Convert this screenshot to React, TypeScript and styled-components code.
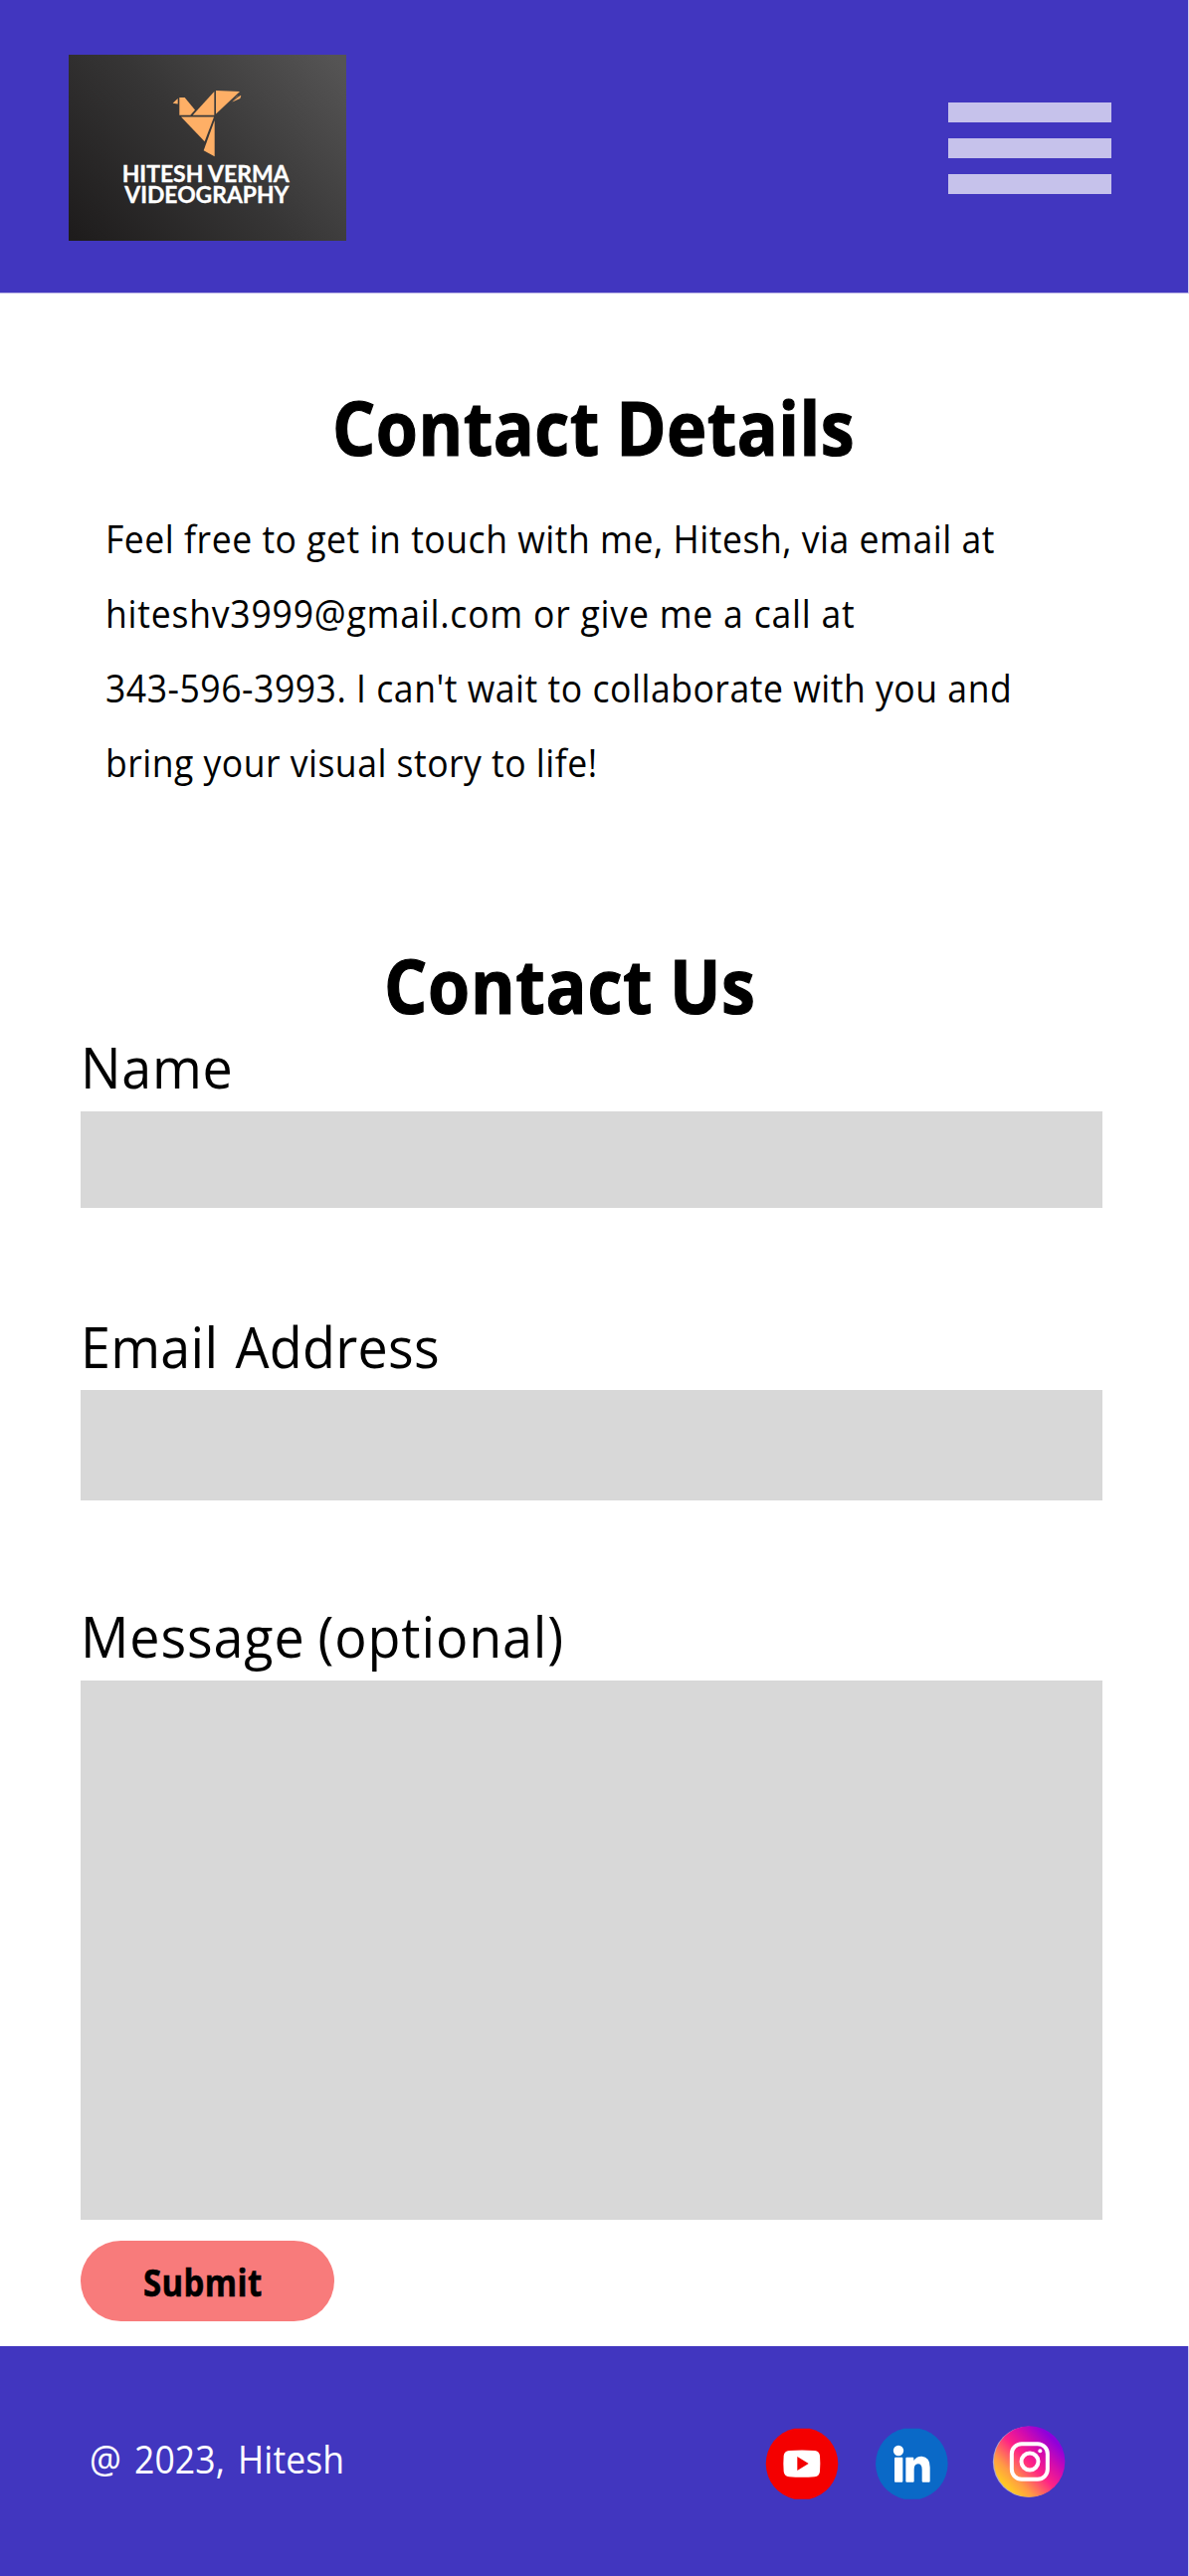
import React from "react";
import styled, { createGlobalStyle } from "styled-components";

const colors = {
  brand: "#4136bf",
  bar: "#c6c2eb",
  field: "#d8d8d8",
  accent: "#f87b7b",
};

const GlobalStyle = createGlobalStyle`
  *, *::before, *::after { box-sizing: border-box; }
  body {
    margin: 0;
    background: #fff;
    color: #000;
    font-family: "Open Sans", "Noto Sans", sans-serif;
  }
`;

const Page = styled.div`
  display: flex;
  flex-direction: column;
  width: 1195px;
  height: 2589px;
  overflow: hidden;
`;

const Header = styled.header`
  display: flex;
  justify-content: space-between;
  align-items: flex-start;
  height: 295px;
  padding: 55px 77px 0 69px;
  background: ${colors.brand};
  border-right: 1px solid #d0cdf0;
  border-bottom: 1px solid #b9b3e6;
`;

const Logo = styled.svg`
  display: block;
  width: 279px;
  height: 187px;
`;

const LogoText = styled.text`
  font-family: Lato, "Open Sans", sans-serif;
  font-size: 67px;
  font-weight: 700;
  fill: #fff;
  stroke: #fff;
  stroke-width: 1px;
`;

const MenuButton = styled.button`
  display: flex;
  flex-direction: column;
  gap: 16px;
  width: 164px;
  margin: 48px 0 0;
  padding: 0;
  border: 0;
  background: none;
`;

const MenuBar = styled.span`
  height: 20px;
  background: ${colors.bar};
`;

const Main = styled.main`
  display: flex;
  flex-direction: column;
  align-items: flex-start;
  padding: 94px 87px 0 80px;
  height: 2063px;
`;

const Fitted = styled.span<{ $scale: number; $track?: number; $words?: number }>`
  display: inline-block;
  white-space: nowrap;
  transform: scaleX(${(p) => p.$scale});
  transform-origin: left;
  letter-spacing: ${(p) => p.$track ?? 0}px;
  word-spacing: ${(p) => p.$words ?? 0}px;
`;

const Title = styled.h1<{ $indent: number }>`
  margin: 0 0 0 ${(p) => p.$indent}px;
  font-size: 75.6px;
  line-height: 80px;
  font-weight: 700;
  -webkit-text-stroke: 1.2px #000;
`;

const Intro = styled.p`
  display: flex;
  flex-direction: column;
  margin: 35px 0 146px 26px;
  font-size: 37.8px;
  line-height: 75px;
`;

const Form = styled.form`
  display: flex;
  flex-direction: column;
  align-items: flex-start;
  width: 100%;
  padding-top: 12px;
`;

const Field = styled.label<{ $after: number }>`
  display: flex;
  flex-direction: column;
  width: 100%;
  margin-bottom: ${(p) => p.$after}px;
`;

const Label = styled.span<{ $gap: number }>`
  margin: 0 0 ${(p) => p.$gap}px 1px;
  font-size: 56.7px;
  line-height: 60px;
`;

const Input = styled.input<{ $height: number }>`
  width: 1027px;
  height: ${(p) => p.$height}px;
  margin-left: 1px;
  padding: 0 20px;
  border: 0;
  border-radius: 0;
  background: ${colors.field};
  font: inherit;
`;

const TextArea = styled.textarea`
  display: block;
  width: 1027px;
  height: 542px;
  margin-left: 1px;
  padding: 20px;
  border: 0;
  border-radius: 0;
  resize: none;
  background: ${colors.field};
  font: inherit;
`;

const Submit = styled.button`
  width: 255px;
  height: 81px;
  margin-left: 1px;
  padding: 2px 0 0 63px;
  border: 0;
  border-radius: 41px;
  background: ${colors.accent};
  color: #000;
  font-family: inherit;
  font-size: 37.8px;
  line-height: 79px;
  font-weight: 700;
  text-align: left;
  -webkit-text-stroke: 0.6px #000;
`;

const Footer = styled.footer`
  display: flex;
  justify-content: space-between;
  align-items: flex-start;
  height: 231px;
  padding: 78px 123px 0 90px;
  background: ${colors.brand};
  border-right: 1px solid #d0cdf0;
`;

const Copyright = styled.span`
  margin-top: 16px;
  color: #fff;
  font-size: 37.8px;
  line-height: 40px;
`;

const Socials = styled.nav`
  display: flex;
  align-items: flex-start;
`;

const SocialIcon = styled.svg<{ $before?: number; $top?: number }>`
  display: block;
  width: 74px;
  height: 74px;
  margin: ${(p) => p.$top ?? 3}px 0 0 ${(p) => p.$before ?? 0}px;
`;

const introLines = [
  { text: "Feel free to get in touch with me, Hitesh, via email at", track: 0.57, words: 0 },
  { text: "hiteshv3999@gmail.com or give me a call at", track: 0.84, words: 0 },
  { text: "343-596-3993. I can't wait to collaborate with you and", track: 0.57, words: 0 },
  { text: "bring your visual story to life!", track: 0.53, words: 0 },
];

function BrandLogo() {
  return (
    <Logo viewBox="57 45 837 560" preserveAspectRatio="none" role="img" aria-label="Hitesh Verma Videography">
      <defs>
        <linearGradient id="plate" gradientUnits="userSpaceOnUse" x1="130" y1="660" x2="830" y2="20">
          <stop offset="0" stopColor="#1e1c1c" />
          <stop offset="0.5" stopColor="#363535" />
          <stop offset="1" stopColor="#555454" />
        </linearGradient>
      </defs>
      <rect x="57" y="45" width="837" height="560" fill="url(#plate)" />
      <g fill="#feaf66">
        <path d="M371 191 386 177V193Z" />
        <path d="M391 174H407L438 211 424 227H391Z" />
        <path d="M496 156V227H431Z" />
        <path d="M501 153 573 156 501 223Z" />
        <path d="M550 187 564 170 577 168 574 177Z" />
        <path d="M396 232H495L467 306Z" />
        <path d="M497 243V351L464 333Z" />
      </g>
      <path d="M547 187 576 164" stroke="#454444" strokeWidth="3" />
      <LogoText x="218" y="428" textLength="504" lengthAdjust="spacingAndGlyphs">HITESH VERMA</LogoText>
      <LogoText x="226" y="490" textLength="495" lengthAdjust="spacingAndGlyphs">VIDEOGRAPHY</LogoText>
    </Logo>
  );
}

function YouTubeIcon() {
  return (
    <SocialIcon viewBox="56 58 222 222" aria-label="YouTube">
      <path d="M144 63H190A109 109 0 0 1 190 276H144A109 109 0 0 1 144 63Z" fill="#f40000" />
      <path
        d="M128 130Q167 127 206 130 219 131 221 145 223 169 221 193 219 208 206 209 167 212 128 209 114 208 112 193 110 169 112 145 114 131 128 130Z"
        fill="#fff"
      />
      <path d="M153 148V190L187 169Z" fill="#f40000" />
    </SocialIcon>
  );
}

function LinkedInIcon() {
  return (
    <SocialIcon $before={36} viewBox="388 58 222 222" aria-label="LinkedIn">
      <path d="M477 63H523A109 109 0 0 1 523 276H477A109 109 0 0 1 477 63Z" fill="#0a69c7" />
      <g fill="#fff">
        <circle cx="460" cy="130" r="15.5" />
        <rect x="448" y="150" width="25" height="75" rx="3" />
        <path d="M485 150H503Q506 150 506 153V160Q514 147 530 147 555 149 555 180V222Q555 225 552 225H534Q531 225 531 222V187Q531 170 519 170 507 171 507 187V222Q507 225 504 225H485Q482 225 482 222V153Q482 150 485 150Z" />
      </g>
    </SocialIcon>
  );
}

function InstagramIcon() {
  return (
    <SocialIcon $before={44} $top={1} viewBox="740 49 222 222" aria-label="Instagram">
      <defs>
        <linearGradient id="insta" gradientUnits="userSpaceOnUse" x1="772" y1="240" x2="932" y2="84">
          <stop offset="0" stopColor="#ffd51c" />
          <stop offset="0.22" stopColor="#ff9a45" />
          <stop offset="0.5" stopColor="#ff2385" />
          <stop offset="0.72" stopColor="#d20bae" />
          <stop offset="0.95" stopColor="#8e00dc" />
        </linearGradient>
      </defs>
      <circle cx="849" cy="161" r="106.5" fill="#b3a4c6" />
      <circle cx="853" cy="160" r="107" fill="url(#insta)" />
      <rect x="799.5" y="106.5" width="108" height="107" rx="30" fill="none" stroke="#fff" strokeWidth="12" />
      <circle cx="854" cy="160" r="25.5" fill="none" stroke="#fff" strokeWidth="12" />
      <circle cx="885" cy="128" r="6" fill="#fff" />
    </SocialIcon>
  );
}

export default function App() {
  return (
    <Page>
      <GlobalStyle />
      <Header>
        <BrandLogo />
        <MenuButton aria-label="Menu">
          <MenuBar />
          <MenuBar />
          <MenuBar />
        </MenuButton>
      </Header>
      <Main>
        <Title $indent={254}>
          <Fitted $scale={0.9} $track={0.55} $words={-2}>Contact Details</Fitted>
        </Title>
        <Intro>
          {introLines.map((line) => (
            <Fitted key={line.text} $scale={0.94} $track={line.track} $words={line.words}>
              {line.text}
            </Fitted>
          ))}
        </Intro>
        <Title as="h2" $indent={306}>
          <Fitted $scale={0.9} $track={0.8} $words={-2}>Contact Us</Fitted>
        </Title>
        <Form onSubmit={(e) => e.preventDefault()}>
          <Field $after={109}>
            <Label $gap={15}>
              <Fitted $scale={0.95} $track={0.8}>Name</Fitted>
            </Label>
            <Input $height={97} />
          </Field>
          <Field $after={106}>
            <Label $gap={14}>
              <Fitted $scale={0.95} $track={0.3} $words={3}>Email Address</Fitted>
            </Label>
            <Input $height={111} />
          </Field>
          <Field $after={21}>
            <Label $gap={15}>
              <Fitted $scale={0.95} $track={0.92} $words={-2}>Message (optional)</Fitted>
            </Label>
            <TextArea />
          </Field>
          <Submit type="submit">
            <Fitted $scale={0.87} $track={0.5}>Submit</Fitted>
          </Submit>
        </Form>
      </Main>
      <Footer>
        <Copyright>
          <Fitted $scale={0.94} $track={0.1} $words={4}>@ 2023, Hitesh</Fitted>
        </Copyright>
        <Socials>
          <YouTubeIcon />
          <LinkedInIcon />
          <InstagramIcon />
        </Socials>
      </Footer>
    </Page>
  );
}
